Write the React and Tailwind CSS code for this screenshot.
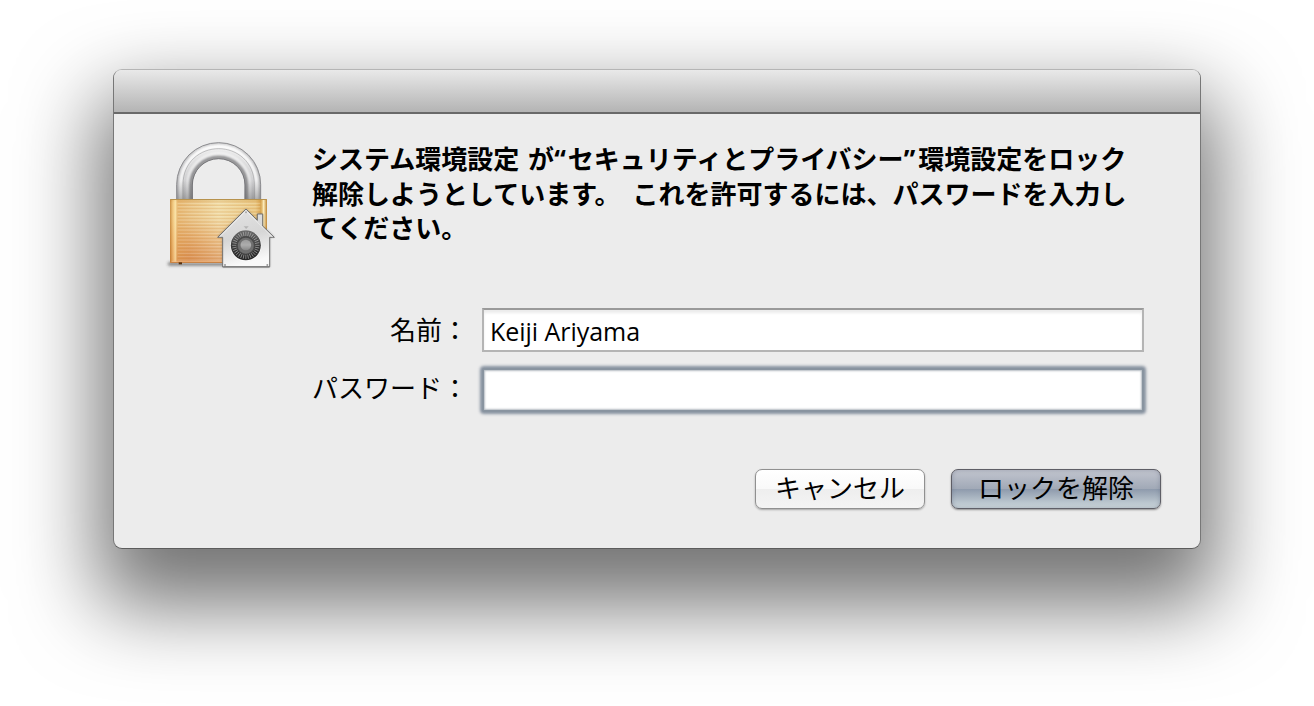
import React from "react";

function LockIcon() {
  const ridges = Array.from({ length: 19 }, (_, i) => 216 + i * 10);
  const ticks = Array.from({ length: 32 }, (_, i) => i * 11.25);
  return (
    <svg className="block h-[150px] w-[130px] shrink-0" viewBox="0 0 390 450" aria-hidden="true">
      <defs>
        <linearGradient id="brass" x1="0" y1="0" x2="0" y2="1">
          <stop offset="0" stopColor="#dcbc7a" />
          <stop offset="0.06" stopColor="#eed79a" />
          <stop offset="0.3" stopColor="#ecd49a" />
          <stop offset="0.6" stopColor="#e4b274" />
          <stop offset="1" stopColor="#d58a50" />
        </linearGradient>
        <linearGradient id="brassSide" x1="0" y1="0" x2="1" y2="0">
          <stop offset="0" stopColor="#b9701f" stopOpacity="0.7" />
          <stop offset="0.03" stopColor="#f5c070" stopOpacity="0.6" />
          <stop offset="0.055" stopColor="#ffeab0" stopOpacity="0.75" />
          <stop offset="0.08" stopColor="#e29a48" stopOpacity="0.45" />
          <stop offset="0.2" stopColor="#e0873a" stopOpacity="0.22" />
          <stop offset="0.5" stopColor="#fff3cf" stopOpacity="0.25" />
          <stop offset="0.88" stopColor="#e0a040" stopOpacity="0.25" />
          <stop offset="0.935" stopColor="#c88420" stopOpacity="0.6" />
          <stop offset="0.965" stopColor="#fff0c0" stopOpacity="0.9" />
          <stop offset="1" stopColor="#b87c28" stopOpacity="0.9" />
        </linearGradient>
        <linearGradient id="steel" gradientUnits="userSpaceOnUse" x1="0" y1="36" x2="0" y2="208">
          <stop offset="0" stopColor="#f4f4f4" />
          <stop offset="0.4" stopColor="#dadadb" />
          <stop offset="1" stopColor="#bcbcbf" />
        </linearGradient>
        <linearGradient id="foot" x1="0" y1="0" x2="0" y2="1">
          <stop offset="0" stopColor="#777" stopOpacity="0" />
          <stop offset="1" stopColor="#666" stopOpacity="0.45" />
        </linearGradient>
        <linearGradient id="house" x1="0" y1="0" x2="0.25" y2="1">
          <stop offset="0" stopColor="#e4e4e4" />
          <stop offset="0.55" stopColor="#d6d6d6" />
          <stop offset="0.8" stopColor="#e9e9e9" />
          <stop offset="1" stopColor="#f9f9f9" />
        </linearGradient>
        <linearGradient id="dial" x1="0" y1="0" x2="0" y2="1">
          <stop offset="0" stopColor="#6c6c6c" />
          <stop offset="0.5" stopColor="#3a3a3a" />
          <stop offset="1" stopColor="#252525" />
        </linearGradient>
        <linearGradient id="knob" x1="0" y1="0" x2="0" y2="1">
          <stop offset="0" stopColor="#9a9a9a" />
          <stop offset="0.5" stopColor="#adadad" />
          <stop offset="1" stopColor="#868686" />
        </linearGradient>
        <filter id="soft" x="-20%" y="-100%" width="140%" height="300%">
          <feGaussianBlur stdDeviation="4" />
        </filter>
        <filter id="blend" x="-20%" y="-20%" width="140%" height="140%">
          <feGaussianBlur stdDeviation="3" />
        </filter>
        <clipPath id="shackle">
          <path d="M64 208V164A127 127 0 0 1 318 164V208H269V165A78 78 0 0 0 113 165V208Z" />
        </clipPath>
      </defs>
      <rect x="38" y="396" width="170" height="11" rx="5" fill="#222" opacity="0.5" filter="url(#soft)" />
      <g clipPath="url(#shackle)">
        <rect x="60" y="30" width="262" height="180" fill="url(#steel)" />
        <path d="M108 210V165A83 83 0 0 1 274 165V210" fill="none" stroke="#7a7a7d" strokeWidth="12" opacity="0.75" filter="url(#blend)" />
        <path d="M97 210V165A94 94 0 0 1 285 165V210" fill="none" stroke="#fff" strokeWidth="7" opacity="0.65" filter="url(#blend)" />
        <path d="M77 210V164A114 114 0 0 1 305 164V210" fill="none" stroke="#fff" strokeWidth="13" opacity="0.75" filter="url(#blend)" />
        <path d="M66 210V164A125 125 0 0 1 316 164V210" fill="none" stroke="#8b8b8e" strokeWidth="5" opacity="0.6" filter="url(#blend)" />
        <path d="M84 208V164C84 95 137 56 191 56S298 95 298 164V208" fill="none" stroke="#909092" strokeWidth="2.500" opacity="0.65" />
        <rect x="60" y="150" width="262" height="60" fill="url(#foot)" />
      </g>
      <path d="M65 208V164A126 126 0 0 1 317 164V208" fill="none" stroke="#8d8d90" strokeWidth="3" />
      <path d="M112 208V165A79 79 0 0 1 270 165V208" fill="none" stroke="#68686b" strokeWidth="3" opacity="0.8" />
      <rect x="45" y="207" width="291" height="192" rx="3" fill="url(#brass)" />
      <rect x="45" y="207" width="291" height="192" rx="3" fill="url(#brassSide)" />
      {ridges.map((y) => (
        <g key={y}>
          <path d={`M68 ${y}H316`} stroke="#cf8c42" strokeOpacity="0.26" strokeWidth="3" />
          <path d={`M68 ${y + 4}H316`} stroke="#fff" strokeOpacity="0.2" strokeWidth="3" />
        </g>
      ))}
      <path d="M46 208.500H335" stroke="#b7924d" strokeWidth="3" />
      <path d="M47 397.500H204" stroke="#c98345" strokeWidth="3" />
      <path d="M50 394H204" stroke="#f2bc88" strokeWidth="3" opacity="0.7" />
      <rect x="71" y="397" width="10" height="6" fill="#56300f" />
      <path
        d="M273 237L307 271V252H323V288L358 322H344V411H203V322H188Z"
        fill="#444"
        opacity="0.5"
        filter="url(#blend)"
      />
      <path
        d="M273 237L307 271V252H323V288L358 322H344V411H203V322H188Z"
        fill="url(#house)"
        stroke="#6c6c6c"
        strokeWidth="2.800"
        strokeLinejoin="round"
      />
      <path d="M194 321L273 243L352 321" fill="none" stroke="#fff" strokeWidth="2" opacity="0.6" />
      <path d="M205 410H343" stroke="#777" strokeWidth="3" />
      <path d="M266 289H281L273.500 297Z" fill="#b5b5b5" />
      <circle cx="273" cy="247" r="3" fill="#aaa" />
      <circle cx="210" cy="405" r="3" fill="#999" />
      <circle cx="337" cy="405" r="3" fill="#999" />
      <circle cx="272.500" cy="347" r="46.500" fill="#fff" opacity="0.8" />
      <circle cx="272.500" cy="346" r="45" fill="url(#dial)" />
      {ticks.map((a) => (
        <path
          key={a}
          d="M272.500 305V318"
          stroke="#c4c4c4"
          strokeWidth="2.500"
          opacity="0.65"
          transform={`rotate(${a} 272.500 346)`}
        />
      ))}
      <circle cx="272.500" cy="346" r="28" fill="#4a4a4a" />
      <circle cx="272.500" cy="347" r="24" fill="#6f6f6f" />
      <circle cx="272.500" cy="345" r="16" fill="url(#knob)" />
    </svg>
  );
}

export default function App() {
  return (
    <main className="h-[706px] w-[1314px] overflow-hidden bg-white pt-[69px] pl-[113px] font-['Open_Sans','Noto_Sans_CJK_JP',sans-serif] text-[26px] text-black">
      <section
        role="dialog"
        className="flex h-[480px] w-[1088px] flex-col overflow-hidden rounded-[9px] border border-t-[#b5b5b5] border-r-[#777] border-b-[#5c5c5c] border-l-[#777] bg-[#ececec] shadow-[0_42px_82px_15px_rgba(0,0,0,0.55)]"
      >
        <header className="-mx-px h-[44px] shrink-0 border-x border-b-2 border-x-[#aaa] border-b-[#696969] bg-linear-to-b from-[#e9e9e9] to-[#b4b4b4]" />
        <div className="flex h-[182px] shrink-0 pt-[16px] pl-[41px]">
          <LockIcon />
          <p className="ml-[27px] pt-[11px] font-['Noto_Sans_CJK_JP',sans-serif] leading-[34px] font-bold whitespace-nowrap">
            <span className="[word-spacing:3px]">
              システム環境設定 が<span className="font-['Open_Sans',sans-serif] tracking-[2px]">“</span>セキュリティとプライバシー<span className="font-['Open_Sans',sans-serif] tracking-[3px]">”</span>環境設定をロック
            </span>
            <br />
            <span className="[word-spacing:6px]">解除しようとしています。 これを許可するには、パスワードを入力し</span>
            <br />
            てください。
          </p>
        </div>
        <form className="flex flex-1 flex-col pt-[12px]" onSubmit={(e) => e.preventDefault()}>
          <div className="flex h-[44px]">
            <label
              htmlFor="name"
              className="w-[368px] pr-[14px] text-right font-['Noto_Sans_CJK_JP',sans-serif] leading-[41px]"
            >
              名前：
            </label>
            <input
              id="name"
              defaultValue="Keiji Ariyama"
              className="h-[44px] w-[662px] border-2 border-t-[#9a9a9a] border-r-[#b4b4b4] border-b-[#b4b4b4] border-l-[#b4b4b4] bg-white px-[6px] pt-[1px] text-[25px] font-medium tracking-[-0.04px] shadow-[inset_0_3px_3px_rgba(0,0,0,0.08)] outline-none"
            />
          </div>
          <div className="mt-[16px] flex h-[44px]">
            <label
              htmlFor="password"
              className="w-[368px] pr-[14px] text-right font-['Noto_Sans_CJK_JP',sans-serif] leading-[37px]"
            >
              パスワード：
            </label>
            <input
              id="password"
              type="password"
              className="h-[44px] w-[662px] rounded-[2px] border-2 border-[#8994a0] bg-white shadow-[0_0_3px_2px_#8792a0,inset_0_0_2px_1px_#b5bcc3] outline-none"
            />
          </div>
          <div className="mt-[57px] flex h-[40px] gap-[26px] pl-[641px] font-['Noto_Sans_CJK_JP',sans-serif]">
            <button
              type="button"
              className="h-[40px] w-[170px] rounded-[7px] border border-[#909090] bg-[linear-gradient(#fff_0%,#f9f9f9_49%,#eeeeee_51%,#f4f4f4_100%)] pb-[5px] leading-[33px] shadow-[0_1px_2px_rgba(0,0,0,0.3)]"
            >
              キャンセル
            </button>
            <button
              type="submit"
              className="h-[40px] w-[210px] rounded-[7px] border border-[#5e5e66] bg-[linear-gradient(#c2c5cf_0%,#a1a9b7_49%,#8f9bad_51%,#cdd8dc_100%)] pb-[5px] leading-[33px] shadow-[0_1px_2px_rgba(0,0,0,0.4),inset_0_0_4px_rgba(60,70,95,0.3)]"
            >
              ロックを解除
            </button>
          </div>
        </form>
      </section>
    </main>
  );
}
